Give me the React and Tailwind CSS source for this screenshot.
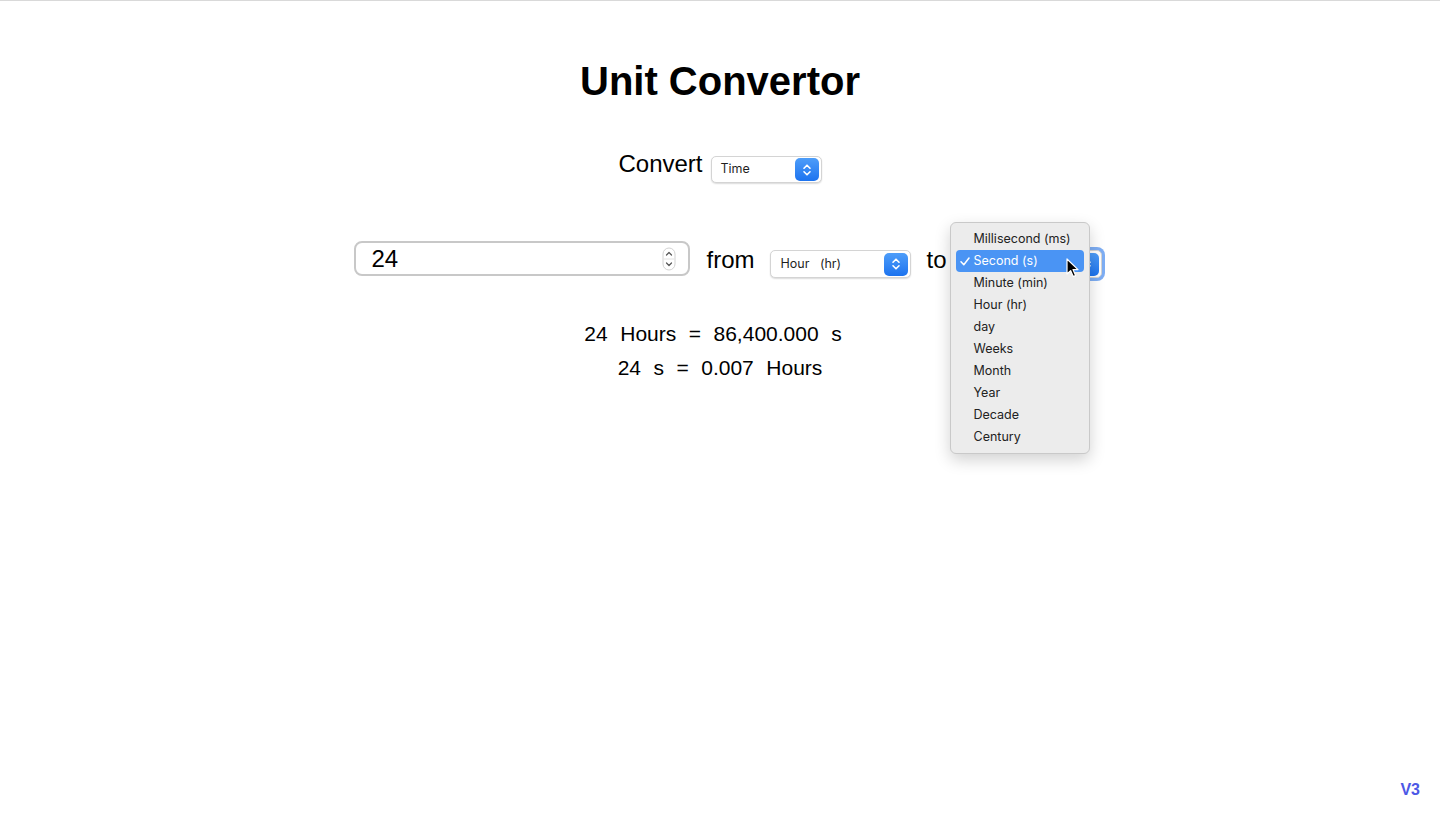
import { useState } from 'react';

const UNITS = [
  'Millisecond (ms)',
  'Second (s)',
  'Minute (min)',
  'Hour (hr)',
  'day',
  'Weeks',
  'Month',
  'Year',
  'Decade',
  'Century'
];

const Chevrons = () => (
  <svg width="10" height="14" viewBox="0 0 10 14" fill="none" stroke="white" strokeWidth="1.6" strokeLinecap="round" strokeLinejoin="round">
    <path d="M2 5.2 L5 2.2 L8 5.2" />
    <path d="M2 8.8 L5 11.8 L8 8.8" />
  </svg>
);

const SelectBox = ({ label, width, height, focused }) => (
  <div
    className={`flex items-center justify-between rounded-[5px] border border-[#d4d4d4] bg-white pl-[9px] pr-[2px] font-['Inter','Liberation_Sans',sans-serif] text-[12.5px] text-[#1f1f1f] shadow-[0_1px_1.5px_rgba(0,0,0,0.14)] ${width} ${height} ${focused ? 'ring-[3px] ring-[#7eaef4]' : ''}`}
  >
    <span className="whitespace-pre">{label}</span>
    <span className="flex h-[23px] w-[24px] items-center justify-center rounded-[5px] bg-gradient-to-b from-[#4d9df9] to-[#1c73ef]">
      <Chevrons />
    </span>
  </div>
);

const Cursor = () => (
  <svg width="13" height="20" viewBox="0 0 13 20">
    <path d="M1 1 L1 16 L4.6 12.6 L7.2 18.6 L9.6 17.6 L7 11.6 L12 11.6 Z" fill="black" stroke="white" strokeWidth="1.2" strokeLinejoin="round" />
  </svg>
);

const Spinner = () => (
  <svg width="14" height="24" viewBox="0 0 14 24" fill="none">
    <rect x="1" y="1" width="12" height="22" rx="6" stroke="#d2d2d2" />
    <line x1="1.5" y1="12" x2="12.5" y2="12" stroke="#e2e2e2" />
    <path d="M4.5 8 L7 5.5 L9.5 8" stroke="#555" strokeWidth="1.2" strokeLinecap="round" strokeLinejoin="round" />
    <path d="M4.5 16 L7 18.5 L9.5 16" stroke="#555" strokeWidth="1.2" strokeLinecap="round" strokeLinejoin="round" />
  </svg>
);

const Menu = () => (
  <div className="absolute left-[-12px] top-[-28px] z-10 w-[140px] rounded-[6px] border border-[#c9c9c9] bg-[#ececec] px-[5px] py-[5px] font-['Inter','Liberation_Sans',sans-serif] text-[12.5px] text-[#222] shadow-[0_6px_16px_rgba(0,0,0,0.18)]">
    {UNITS.map((unit) => {
      const active = unit === 'Second (s)';
      return (
        <div
          key={unit}
          className={`flex h-[22px] items-center rounded-[4px] ${active ? 'bg-[#4a94f4] text-white' : ''}`}
        >
          <span className="flex w-[18px] justify-center">
            {active && (
              <svg width="10" height="9" viewBox="0 0 10 9" fill="none" stroke="white" strokeWidth="1.5" strokeLinecap="round" strokeLinejoin="round">
                <path d="M1 4.8 L3.8 7.8 L9 1" />
              </svg>
            )}
          </span>
          <span>{unit}</span>
        </div>
      );
    })}
  </div>
);

export default function App() {
  const [value] = useState('24');

  return (
    <div className="relative flex h-[820px] flex-col items-center border-t border-[#d9d9d9] bg-white font-['Liberation_Sans',Arial,sans-serif] text-black">
      <h1 className="mt-[56px] text-[40px] font-bold leading-[48px]">Unit Convertor</h1>

      <div className="mt-[45px] flex h-[34px] items-start gap-[8px]">
        <span className="text-[24px] leading-[28px]">Convert</span>
        <div className="mt-[6px]">
          <SelectBox label="Time" width="w-[111px]" height="h-[27px]" />
        </div>
      </div>

      <div className="mt-[57px] flex items-start gap-[15px] pl-[16px]">
        <div className="flex h-[35px] w-[336px] items-center justify-between rounded-[8px] border-2 border-[#c8c8c8] pl-[15px] pr-[12px]">
          <span className="text-[24px] leading-none">{value}</span>
          <Spinner />
        </div>
        <span className="mt-[5px] ml-[1px] mr-[1px] text-[24px] leading-[28px]">from</span>
        <div className="mt-[9px]">
          <SelectBox label="Hour   (hr)" width="w-[141px]" height="h-[28px]" />
        </div>
        <span className="mt-[5px] text-[24px] leading-[28px]">to</span>
        <div className="relative mt-[9px]">
          <SelectBox label="" width="w-[140px]" height="h-[28px]" focused />
          <Menu />
          <div className="absolute left-[104px] top-[8px] z-20">
            <Cursor />
          </div>
        </div>
      </div>

      <div className="mt-[39px] flex flex-col items-center text-[21px] leading-[34px]">
        <div className="flex gap-[12.5px] pr-[14px]">
          <span>24</span>
          <span>Hours</span>
          <span>=</span>
          <span>86,400.000</span>
          <span>s</span>
        </div>
        <div className="flex gap-[12.5px]">
          <span>24</span>
          <span>s</span>
          <span>=</span>
          <span>0.007</span>
          <span>Hours</span>
        </div>
      </div>

      <span className="absolute bottom-[22px] right-[20px] text-[16px] font-bold leading-[16px] text-[#4c58e6]">V3</span>
    </div>
  );
}
